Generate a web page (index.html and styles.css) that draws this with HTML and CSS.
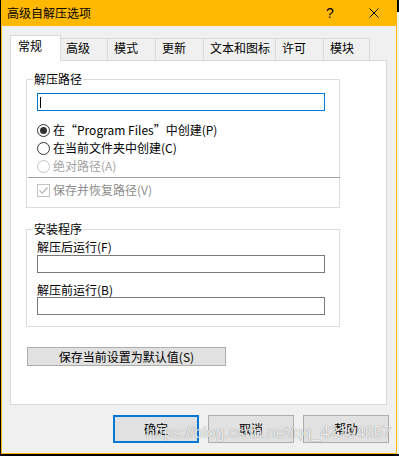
FILE: index.html
```html
<!DOCTYPE html>
<html lang="zh-CN">
    <head>
        <meta charset="utf-8">
        <link rel="stylesheet" href="styles.css">
    </head>
    <body>
        <div class="window">
            <div class="titlebar">
                <span class="title">高级自解压选项</span>
                <span class="cap help">?</span>
                <span class="cap close">
                    <svg width="10" height="10" viewBox="0 0 10 10"><path d="M0.5 0.5L9.5 9.5M9.5 0.5L0.5 9.5" stroke="#000" stroke-width="1" fill="none"/></svg>
                </span>
            </div>
            <div class="content">
                <ul class="tabs">
                    <li class="current">常规</li>
                    <li>高级</li>
                    <li>模式</li>
                    <li>更新</li>
                    <li class="wide">文本和图标</li>
                    <li>许可</li>
                    <li>模块</li>
                </ul>
                <div class="panel">
                    <fieldset class="group">
                        <legend>解压路径</legend>
                        <div class="group-body">
                            <div class="field active"><i class="caret"></i></div>
                            <div class="options">
                                <label class="opt"><i class="radio checked"></i>在“Program Files”中创建(P)</label>
                                <label class="opt"><i class="radio"></i>在当前文件夹中创建(C)</label>
                                <label class="opt disabled"><i class="radio"></i>绝对路径(A)</label>
                            </div>
                            <div class="sep"></div>
                            <label class="opt check-row disabled">
                                <i class="check"><svg width="11" height="11" viewBox="0 0 11 11"><path d="M1.5 5.5L4.2 8.2L9.5 2.5" stroke="#b5b5b5" stroke-width="1.2" fill="none"/></svg></i>保存并恢复路径(V)
                            </label>
                        </div>
                    </fieldset>
                    <fieldset class="group second">
                        <legend>安装程序</legend>
                        <div class="group-body bottom">
                            <div class="label">解压后运行(F)</div>
                            <div class="field"></div>
                            <div class="label next">解压前运行(B)</div>
                            <div class="field"></div>
                        </div>
                    </fieldset>
                    <div class="btn save">保存当前设置为默认值(S)</div>
                </div>
                <div class="buttons">
                    <div class="btn default">确定</div>
                    <div class="btn">取消</div>
                    <div class="btn">帮助</div>
                </div>
            </div>
            <div class="watermark">https://blog.csdn.net/qq_42194657</div>
        </div>
        <div class="edge"></div>
    </body>
</html>
```

FILE: styles.css
```css
* {
    margin: 0;
    padding: 0;
    box-sizing: border-box;
}
ul {
    list-style: none;
}
body {
    width: 399px;
    height: 456px;
    background-color: #000;
    display: flex;
    font-family: "Noto Sans CJK SC", sans-serif;
    font-size: 12px;
    color: #000;
    overflow: hidden;
}
.window {
    position: relative;
    margin-left: 1px;
    width: 396px;
    height: 454px;
    border: 1px solid #ffb900;
    border-top: 0;
    background-color: #f0f0f0;
}
.edge {
    width: 2px;
    height: 454px;
    background: linear-gradient(#000 12px, #f2f2f2 12px);
}
.titlebar {
    height: 26px;
    background-color: #ffb900;
    display: flex;
    align-items: center;
}
.title {
    flex: 1;
    padding-left: 5px;
    line-height: 18px;
}
.cap {
    width: 44px;
    height: 26px;
    display: flex;
    align-items: center;
    justify-content: center;
}
.help {
    font-family: "Liberation Sans", sans-serif;
    font-size: 14px;
}
.content {
    padding: 9px 9px 0 8px;
}
.tabs {
    display: flex;
    align-items: flex-end;
    height: 25px;
}
.tabs li {
    width: 48px;
    height: 22px;
    border-top: 1px solid #d9d9d9;
    border-right: 1px solid #d9d9d9;
    padding-left: 6px;
    line-height: 18px;
    white-space: nowrap;
}
.tabs li:nth-child(2) {
    width: 47px;
    padding-left: 5px;
}
.tabs li:last-child {
    width: 46px;
}
.tabs li.wide {
    width: 72px;
}
.tabs li.current {
    position: relative;
    z-index: 1;
    width: 51px;
    height: 26px;
    margin-bottom: -1px;
    border: 1px solid #d9d9d9;
    border-bottom: 0;
    background-color: #fff;
    padding: 1px 0 0 7px;
}
.panel {
    height: 345px;
    border: 1px solid #d9d9d9;
    background-color: #fff;
    padding-top: 11px;
}
.group {
    width: 314px;
    margin-left: 15px;
    border: 1px solid #dcdcdc;
    min-width: 0;
}
.group legend {
    margin-left: 6px;
    padding: 0 1px;
    line-height: 14px;
}
.group.second {
    margin-top: 14px;
}
.group-body {
    padding: 0 0 8px 10px;
}
.group-body.bottom {
    padding-bottom: 11px;
}
.field {
    width: 288px;
    height: 18px;
    border: 1px solid #7a7a7a;
    background-color: #fff;
}
.field.active {
    margin-top: 7px;
    border-color: #0078d7;
    padding: 3px 0 0 2px;
}
.caret {
    display: block;
    width: 1px;
    height: 11px;
    background-color: #000;
}
.options {
    margin-top: 10px;
}
.opt {
    display: flex;
    align-items: center;
    gap: 3px;
    height: 18px;
    line-height: 18px;
    white-space: nowrap;
}
.opt.disabled {
    color: #a3a3a3;
}
.radio {
    width: 13px;
    height: 13px;
    border: 1px solid #333;
    border-radius: 50%;
    display: flex;
    align-items: center;
    justify-content: center;
}
.radio.checked::after {
    content: "";
    width: 7px;
    height: 7px;
    border-radius: 50%;
    background-color: #333;
}
.opt.disabled .radio {
    border-color: #c4c4c4;
}
.sep {
    height: 1px;
    margin: 2px -1px 0 -9px;
    background-color: #a0a0a0;
}
.check-row {
    margin-top: 3px;
}
.check-row.disabled {
    color: #8c8c8c;
}
.check {
    width: 13px;
    height: 13px;
    border: 1px solid #c4c4c4;
    display: flex;
    align-items: center;
    justify-content: center;
}
.label {
    margin-top: 4px;
    margin-bottom: 1px;
    line-height: 14px;
}
.label.next {
    margin-top: 10px;
    margin-bottom: 0;
}
.btn {
    width: 86px;
    height: 28px;
    border: 1px solid #adadad;
    background-color: #e1e1e1;
    display: flex;
    align-items: center;
    justify-content: center;
    line-height: 18px;
}
.btn.save {
    width: 199px;
    height: 19px;
    margin: 20px 0 0 16px;
}
.btn.default {
    border: 2px solid #0078d7;
}
.buttons {
    display: flex;
    justify-content: flex-end;
    gap: 9px;
    margin: 10px -2px 0 0;
}
.watermark {
    position: absolute;
    left: 144px;
    top: 424px;
    font-family: "Liberation Sans", sans-serif;
    font-size: 16px;
    line-height: 18px;
    color: rgba(255, 255, 255, 0.85);
    text-shadow: 0 0 1px rgba(0, 0, 0, 0.5);
    white-space: nowrap;
}
```
